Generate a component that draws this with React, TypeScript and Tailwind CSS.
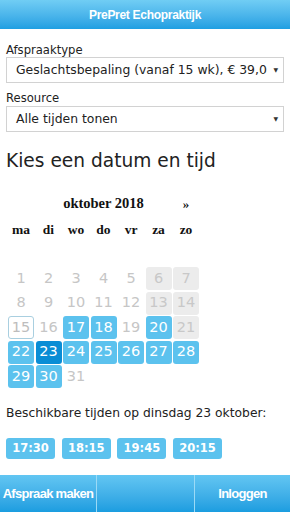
import React from "react";

const sans = { fontFamily: '"DejaVu Sans", Verdana, sans-serif' };
const serif = { fontFamily: '"Liberation Serif", "Times New Roman", serif' };
const arial = { fontFamily: '"Liberation Sans", Arial, sans-serif' };

type Kind = "empty" | "off" | "weekendOff" | "today" | "avail" | "selected";

const weeks: [number | null, Kind][][] = [
  [
    [1, "off"], [2, "off"], [3, "off"], [4, "off"], [5, "off"], [6, "weekendOff"], [7, "weekendOff"],
  ],
  [
    [8, "off"], [9, "off"], [10, "off"], [11, "off"], [12, "off"], [13, "weekendOff"], [14, "weekendOff"],
  ],
  [
    [15, "today"], [16, "off"], [17, "avail"], [18, "avail"], [19, "off"], [20, "avail"], [21, "weekendOff"],
  ],
  [
    [22, "avail"], [23, "selected"], [24, "avail"], [25, "avail"], [26, "avail"], [27, "avail"], [28, "avail"],
  ],
  [
    [29, "avail"], [30, "avail"], [31, "off"], [null, "empty"], [null, "empty"], [null, "empty"], [null, "empty"],
  ],
];

function cellClass(k: Kind) {
  switch (k) {
    case "off":
      return "text-[#c6c6c6]";
    case "weekendOff":
      return "bg-[#ececec] text-[#c8c8c8]";
    case "today":
      return "border border-[#a9cfe0] bg-white text-[#bdbdbd]";
    case "avail":
      return "bg-[#5cc2ee] text-white";
    case "selected":
      return "bg-[#0a8dd5] text-white";
    default:
      return "";
  }
}

export default function App() {
  const days = ["ma", "di", "wo", "do", "vr", "za", "zo"];
  return (
    <div className="w-[290px] h-[512px] bg-white flex flex-col overflow-hidden" style={sans}>
      <div
        className="h-[29px] shrink-0 flex items-center justify-center bg-gradient-to-b from-[#70cdf4] to-[#1d9fe2] text-white font-bold text-[12px] tracking-[-0.3px]"
        style={arial}
      >
        PrePret Echopraktijk
      </div>

      <div className="px-[6px] pt-[14px] flex flex-col">
        <div className="text-[11.6px] leading-[14px] text-[#222]">Afspraaktype</div>
        <div className="relative h-[26px] border border-[#d2d2d2] bg-white flex items-center pl-[9px] pr-[16px]">
          <span className="block min-w-0 flex-1 whitespace-nowrap overflow-hidden text-[12.4px] text-[#222]">
            Geslachtsbepaling (vanaf 15 wk), € 39,00
          </span>
          <span className="absolute right-[5px] top-[9px] text-[6px] leading-[6px] text-[#333]">▼</span>
        </div>

        <div className="mt-[8px] text-[11.6px] leading-[14px] text-[#222]">Resource</div>
        <div className="relative mt-[1px] h-[26px] border border-[#d2d2d2] bg-white flex items-center pl-[9px] pr-[16px]">
          <span className="whitespace-nowrap text-[12.4px] text-[#222]">Alle tijden tonen</span>
          <span className="absolute right-[5px] top-[9px] text-[6px] leading-[6px] text-[#333]">▼</span>
        </div>

        <div className="mt-[17px] text-[18.6px] leading-[24px] text-[#222]">Kies een datum en tijd</div>

        <div className="ml-[2px] mt-[19px] flex flex-col">
          <div className="grid grid-cols-[repeat(7,26px)] gap-x-[1.5px] h-[24px] items-center text-[#111] font-bold" style={serif}>
            <div />
            <div className="col-span-5 text-center text-[14.5px]">oktober 2018</div>
            <div className="text-center text-[13px]">»</div>
          </div>
          <div className="mt-[2px] grid grid-cols-[repeat(7,26px)] gap-x-[1.5px] h-[24px] items-center text-[#111] font-bold text-[13.5px]" style={serif}>
            {days.map((d) => (
              <div key={d} className="text-center">{d}</div>
            ))}
          </div>
          <div className="h-[25px]" />
          <div className="grid grid-cols-[repeat(7,26px)] gap-x-[1.5px] gap-y-[1.5px]">
            {weeks.flat().map(([n, k], i) => (
              <div
                key={i}
                className={`h-[23px] rounded-[3px] flex items-center justify-center text-[14.5px] ${cellClass(k)}`}
              >
                {n ?? ""}
              </div>
            ))}
          </div>
        </div>

        <div className="mt-[17px] text-[12.3px] leading-[16px] text-[#222]">
          Beschikbare tijden op dinsdag 23 oktober:
        </div>

        <div className="mt-[17px] flex gap-[6.7px]">
          {["17:30", "18:15", "19:45", "20:15"].map((t) => (
            <div
              key={t}
              className="w-[49px] h-[21px] rounded-[3px] bg-[#5cc2ee] text-white font-bold text-[11.5px] flex items-center justify-center"
            >
              {t}
            </div>
          ))}
        </div>
      </div>

      <div
        className="mt-auto h-[37px] shrink-0 flex bg-gradient-to-b from-[#62c6f2] to-[#1a9de0] text-white font-bold text-[13px] tracking-[-0.7px]"
        style={arial}
      >
        <div className="w-[96px] flex items-center justify-center">Afspraak maken</div>
        <div className="w-[1px] bg-[#9bdaf6]" />
        <div className="w-[97px]" />
        <div className="w-[1px] bg-[#9bdaf6]" />
        <div className="flex-1 flex items-center justify-center">Inloggen</div>
      </div>
    </div>
  );
}
